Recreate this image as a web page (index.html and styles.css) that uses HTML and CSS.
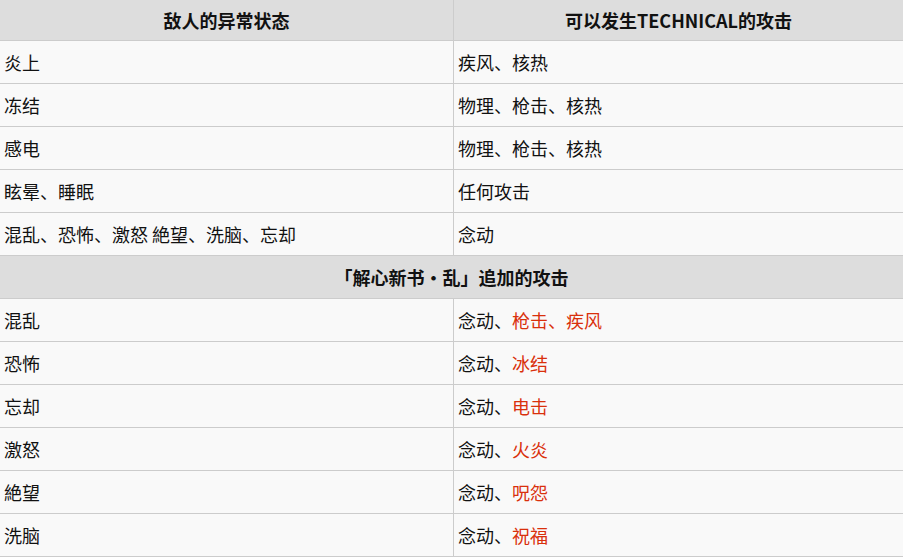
FILE: index.html
```html
<!DOCTYPE html>
<html lang="zh">
<head>
<meta charset="utf-8">
<link rel="stylesheet" href="styles.css">
</head>
<body>
<table class="tbl">
  <colgroup><col class="c1"><col class="c2"></colgroup>
  <tr class="head top"><th>敌人的异常状态</th><th>可以发生TECHNICAL的攻击</th></tr>
  <tr><td>炎上</td><td>疾风、核热</td></tr>
  <tr><td>冻结</td><td>物理、枪击、核热</td></tr>
  <tr><td>感电</td><td>物理、枪击、核热</td></tr>
  <tr><td>眩晕、睡眠</td><td>任何攻击</td></tr>
  <tr><td>混乱、恐怖、激怒 絶望、洗脑、忘却</td><td>念动</td></tr>
  <tr class="head sect"><th colspan="2">「解心新书・乱」追加的攻击</th></tr>
  <tr><td>混乱</td><td>念动、<span class="hl">枪击、疾风</span></td></tr>
  <tr><td>恐怖</td><td>念动、<span class="hl">冰结</span></td></tr>
  <tr><td>忘却</td><td>念动、<span class="hl">电击</span></td></tr>
  <tr><td>激怒</td><td>念动、<span class="hl">火炎</span></td></tr>
  <tr><td>絶望</td><td>念动、<span class="hl">呪怨</span></td></tr>
  <tr><td>洗脑</td><td>念动、<span class="hl">祝福</span></td></tr>
</table>
</body>
</html>
```
FILE: styles.css
```css
html, body {
  margin: 0;
  padding: 0;
  background: #ffffff;
}
.tbl {
  width: 903px;
  border-collapse: separate;
  border-spacing: 0;
  table-layout: fixed;
  font-family: "Noto Sans CJK SC", "Noto Sans", sans-serif;
  font-size: 18px;
  color: #111;
  background: #f9f9f9;
}
.c1 { width: 454px; }
.c2 { width: 449px; }
.tbl td, .tbl th {
  box-sizing: border-box;
  border-bottom: 1px solid #cccccc;
  padding: 8px 4px;
  line-height: 26px;
  height: 43px;
  text-align: left;
  vertical-align: middle;
  white-space: nowrap;
}
.tbl td:first-child, .tbl th:first-child {
  border-right: 1px solid #cccccc;
}
.tbl th[colspan] { border-right: none; }
.tbl .head th {
  background: #dddddd;
  font-weight: bold;
  text-align: center;
}
.tbl .top th {
  padding: 7px 4px;
  height: 41px;
}
.hl { color: #d9300c; }
```
